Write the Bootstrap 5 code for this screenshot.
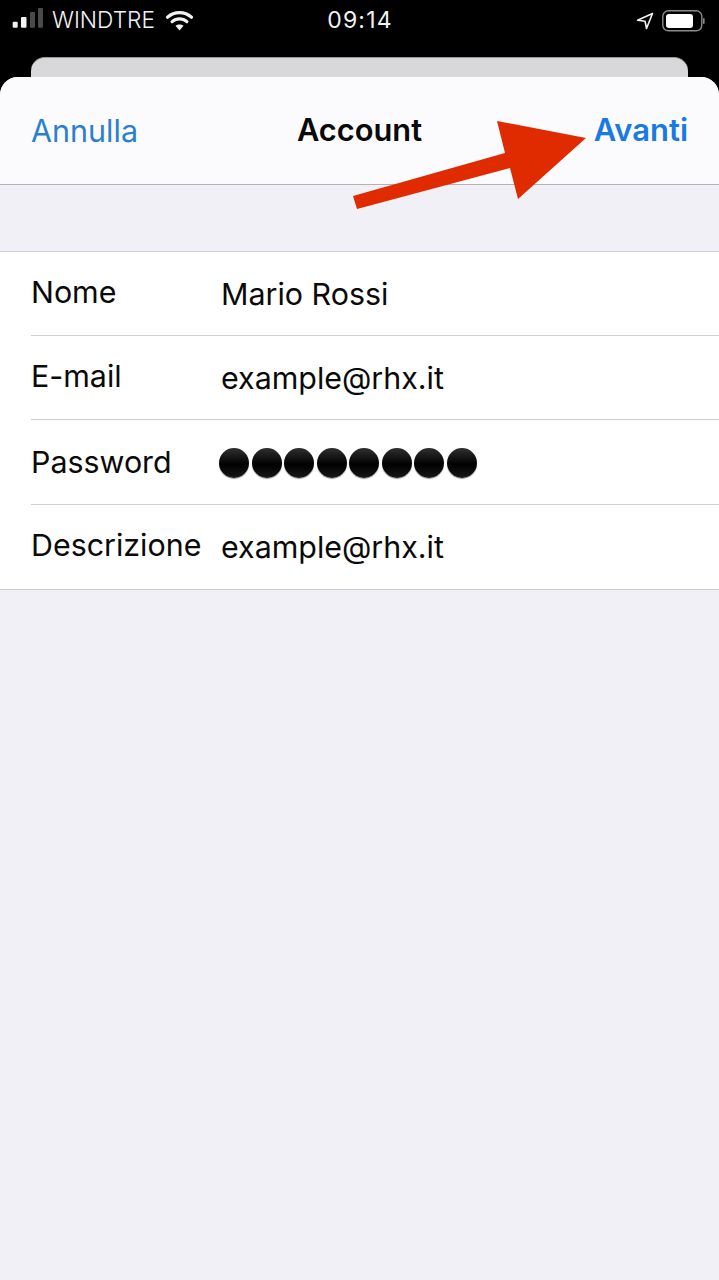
<!DOCTYPE html>
<html lang="it">
<head>
    <meta charset="UTF-8">
    <meta name="viewport" content="width=device-width, initial-scale=1.0">
    <title>Account</title>

    <link href="https://cdn.jsdelivr.net/npm/bootstrap@5.3.0/dist/css/bootstrap.min.css" rel="stylesheet">

    <style>
        body {
            background-color: #000;
            font-family: Inter, "Liberation Sans", sans-serif;
            color: #0a0a0a;
            height: 1280px;
            overflow: hidden;
        }
        .screen {
            position: relative;
            width: 719px;
            height: 1280px;
        }
        .status-bar {
            height: 57px;
            padding: 0 14px 16px 12px;
            color: #f2f2f2;
            font-size: 23px;
        }
        .status-side {
            flex: 1 1 0;
        }
        .carrier {
            font-weight: 300;
            font-size: 22.7px;
            margin-left: 8px;
            margin-right: 11px;
        }
        .clock {
            font-size: 23px;
            letter-spacing: 1.2px;
            padding-left: 3px;
        }
        .back-sheet {
            height: 20px;
            margin: 0 31px;
            background-color: #d8d8da;
            border-top: 1px solid #9a9a9a;
            border-radius: 14px 14px 0 0;
        }
        .sheet {
            height: 1203px;
            background-color: #f0f0f6;
            border-radius: 18px 18px 0 0;
            overflow: hidden;
        }
        .sheet-head {
            height: 108px;
            padding: 0 31px;
            background-color: #fbfbfd;
            border-bottom: 1px solid #b2b2b4;
            font-size: 30.5px;
        }
        .head-side {
            flex: 1 1 0;
        }
        .head-link {
            color: #2a7fcf;
            text-decoration: none;
        }
        .head-next {
            color: #1a7ae0;
            font-weight: 600;
            font-size: 31px;
        }
        .head-title {
            font-weight: 600;
            font-size: 30.8px;
        }
        .form-rows {
            margin-top: 66px;
            background-color: #fff;
            border-top: 1px solid #cfcfd1;
            border-bottom: 1px solid #cfcfd1;
        }
        .form-row-item {
            height: 84.2px;
            margin-left: 31px;
            padding-top: 2px;
            font-size: 30.4px;
            border-bottom: 1px solid #cfcfd1;
        }
        .form-row-item:last-child {
            height: 84px;
            border-bottom: 0;
        }
        .row-label {
            width: 190px;
            flex: none;
            margin-top: -3px;
        }
        .pw-label {
            margin-top: 0;
        }
        .pw-list {
            margin-left: -2px;
        }
        .pw-dot {
            width: 30px;
            height: 30px;
            margin-right: 2.5px;
            border-radius: 50%;
            background: linear-gradient(#303030, #000 55%, #181818);
            box-shadow: 0 1px 1px #999;
        }
        .red-arrow {
            position: absolute;
            left: 0;
            top: 0;
        }
    </style>
</head>
<body>

<div class="screen">
    <div class="status-bar d-flex align-items-center">
        <div class="status-side d-flex align-items-center">
            <svg width="32" height="26" viewBox="0 0 32 26">
                <rect x="0.7" y="14.7" width="5" height="6" rx="1" fill="#f2f2f2"/>
                <rect x="9" y="10" width="5.5" height="10.7" rx="1" fill="#f2f2f2"/>
                <rect x="18" y="5" width="5" height="15.7" rx="1" fill="#4a4a4a"/>
                <rect x="26" y="1" width="5" height="19.7" rx="1" fill="#4a4a4a"/>
            </svg>
            <span class="carrier">WINDTRE</span>
            <svg width="27" height="21" viewBox="0 0 28 22">
                <path d="M1.5 7.5C8.5 1 19.5 1 26.5 7.5" fill="none" stroke="#f2f2f2" stroke-width="3.4" stroke-linecap="round"/>
                <path d="M6.3 12.2C10.8 8.2 17.2 8.2 21.7 12.2" fill="none" stroke="#f2f2f2" stroke-width="3.4" stroke-linecap="round"/>
                <path d="M14 21.5L9.8 16.5C12.2 14.6 15.8 14.6 18.2 16.5Z" fill="#f2f2f2"/>
            </svg>
        </div>
        <div class="clock">09:14</div>
        <div class="status-side d-flex align-items-center justify-content-end gap-2">
            <svg width="18" height="18" viewBox="0 0 18 18">
                <path d="M16.5 1.5L1.5 8.2L9 9.2L10.5 16.5Z" fill="none" stroke="#f2f2f2" stroke-width="1.6" stroke-linejoin="round"/>
            </svg>
            <svg width="43" height="22" viewBox="0 0 43 22">
                <rect x="0.8" y="0.8" width="39" height="20" rx="5.5" fill="none" stroke="#8a8a8a" stroke-width="1.4"/>
                <rect x="4" y="4" width="27" height="14" rx="3" fill="#fff"/>
                <rect x="41" y="8" width="1.6" height="6" rx="0.8" fill="#8a8a8a"/>
            </svg>
        </div>
    </div>

    <div class="back-sheet"></div>
    <div class="sheet">
        <div class="sheet-head d-flex align-items-center">
            <div class="head-side"><a class="head-link" href="#">Annulla</a></div>
            <span class="head-title">Account</span>
            <div class="head-side text-end"><a class="head-link head-next" href="#">Avanti</a></div>
        </div>
        <div class="form-rows">
            <div class="form-row-item d-flex align-items-center">
                <div class="row-label">Nome</div>
                <div>Mario Rossi</div>
            </div>
            <div class="form-row-item d-flex align-items-center">
                <div class="row-label">E-mail</div>
                <div>example@rhx.it</div>
            </div>
            <div class="form-row-item d-flex align-items-center">
                <div class="row-label pw-label">Password</div>
                <div class="pw-list d-flex">
                    <div class="pw-dot"></div>
                    <div class="pw-dot"></div>
                    <div class="pw-dot"></div>
                    <div class="pw-dot"></div>
                    <div class="pw-dot"></div>
                    <div class="pw-dot"></div>
                    <div class="pw-dot"></div>
                    <div class="pw-dot"></div>
                </div>
            </div>
            <div class="form-row-item d-flex align-items-center">
                <div class="row-label">Descrizione</div>
                <div>example@rhx.it</div>
            </div>
        </div>
    </div>

    <svg class="red-arrow" width="719" height="260" viewBox="0 0 719 260">
        <polygon points="353,196 505,153 497,121 586,138 518,199 510,168 357,209" fill="#e02a00"/>
    </svg>
</div>

<script src="https://cdn.jsdelivr.net/npm/bootstrap@5.3.0/dist/js/bootstrap.bundle.min.js"></script>
</body>
</html>
